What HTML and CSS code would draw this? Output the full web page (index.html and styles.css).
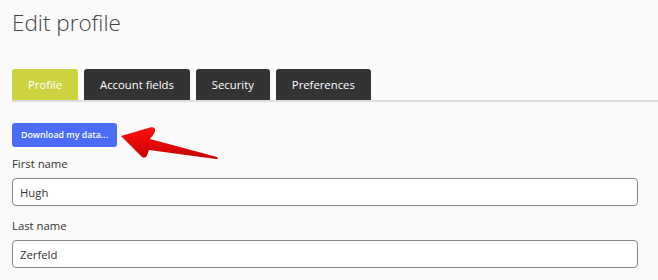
FILE: index.html
```html
<!DOCTYPE html>
<html lang="en">
<head>
  <meta charset="UTF-8" />
  <meta name="viewport" content="width=device-width, initial-scale=1.0" />
  <title>Edit profile</title>
  <link rel="stylesheet" href="styles.css">
</head>
<body>
  <h1>Edit profile</h1>
  <div class="tabs">
    <a class="tab active" href="#">Profile</a>
    <a class="tab" href="#">Account fields</a>
    <a class="tab" href="#">Security</a>
    <a class="tab" href="#">Preferences</a>
  </div>
  <div class="download-row">
    <button class="download">Download my data...</button>
    <svg class="arrow" width="110" height="40" viewBox="110 122 110 40">
      <defs>
        <linearGradient id="red" x1="0" y1="0" x2="0" y2="1">
          <stop offset="0" stop-color="#ff1010" />
          <stop offset="1" stop-color="#c80000" />
        </linearGradient>
      </defs>
      <path d="M121 136 L150 127.5 Q156 126.5 155 131.5 Q154 134 150 139 L217 157 Q219 159 216 159 L149 150 L147 155.5 Q145 159 142 157 Z" fill="url(#red)" />
    </svg>
  </div>
  <form class="profile-form">
    <div class="field">
      <label for="first">First name</label>
      <input id="first" type="text" value="Hugh" />
    </div>
    <div class="field">
      <label for="last">Last name</label>
      <input id="last" type="text" value="Zerfeld" />
    </div>
  </form>
</body>
</html>
```

FILE: styles.css
```css
body {
  margin: 0;
  padding: 6px 0 0 12px;
  background: #fafafa;
  font-family: "Open Sans", sans-serif;
  color: #333;
}
h1 {
  margin: 0;
  font-size: 22.5px;
  font-weight: 300;
  line-height: 34px;
  color: #444;
}
.tabs {
  display: flex;
  gap: 6px;
  margin-top: 29px;
  border-bottom: 2px solid #ddd;
}
.tab {
  height: 31px;
  line-height: 31px;
  padding: 0 16px;
  background: #333;
  color: #fff;
  font-size: 11.3px;
  text-decoration: none;
  border-radius: 3px 3px 0 0;
}
.tab.active {
  background: #cdd340;
}
.download-row {
  position: relative;
  margin-top: 19px;
  height: 24px;
}
.download {
  height: 24px;
  padding: 0 9px;
  border: none;
  border-radius: 3px;
  background: #4a6cf7;
  color: #fff;
  font-family: "Open Sans", sans-serif;
  font-size: 8.8px;
  font-weight: 600;
}
.arrow {
  position: absolute;
  left: 98px;
  top: 1px;
}
.profile-form {
  margin: 11px 20px 0 0;
  display: flex;
  flex-direction: column;
  gap: 12px;
}
.field label {
  display: block;
  font-size: 11.3px;
  line-height: 16px;
  margin-bottom: 6px;
}
.field input {
  display: block;
  box-sizing: border-box;
  width: 100%;
  height: 28px;
  padding: 0 7px;
  border: 1px solid #888;
  border-radius: 4px;
  background: #fff;
  font-family: "Open Sans", sans-serif;
  font-size: 11.3px;
  color: #333;
}
```
